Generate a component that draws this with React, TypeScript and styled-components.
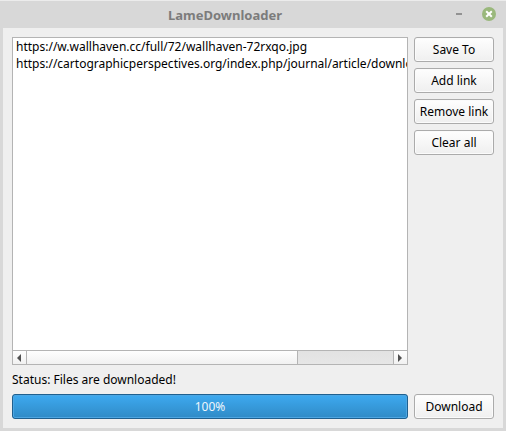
import React, { useState } from "react";
import styled, { createGlobalStyle } from "styled-components";

const GlobalStyle = createGlobalStyle`
  * { box-sizing: border-box; }
  body { margin: 0; background: #d8d8d8; }
  body, button { font-family: "Noto Sans", sans-serif; font-size: 12px; line-height: 17px; color: #000; }
`;

const Window = styled.div`
  min-height: 100vh;
  display: flex;
  flex-direction: column;
  background: #d8d8d8;
  border-top: 1px solid #ececec;
  padding: 0 3px 3px;
`;

const TitleBar = styled.header`
  height: 27px;
  flex: none;
  display: grid;
  grid-template-columns: 60px 1fr 60px;
  align-items: center;
`;

const Title = styled.h1`
  margin: 0;
  grid-column: 2;
  padding-right: 56px;
  text-align: center;
  font-size: 13px;
  line-height: 20px;
  font-weight: 700;
  color: #7c7c7c;
`;

const WindowControls = styled.div`
  align-self: start;
  display: flex;
  justify-content: flex-end;
  align-items: center;
  gap: 16px;
  padding: 6px 7px 0 0;
`;

const ControlButton = styled.button`
  width: 14px;
  height: 14px;
  padding: 0;
  border: 0;
  background: none;
  svg { display: block; }
`;

const Content = styled.main`
  flex: 1;
  display: grid;
  grid-template-columns: minmax(0, 1fr) 80px;
  grid-template-rows: 1fr 17px 25px;
  column-gap: 6px;
  row-gap: 6px;
  padding: 9px;
  background: #efefef;
`;

const ListFrame = styled.section`
  display: flex;
  flex-direction: column;
  min-width: 0;
  background: #fff;
  border: 1px solid #b4b4b4;
`;

const LinkList = styled.ul`
  flex: 1;
  margin: 0;
  padding: 0 0 0 3px;
  overflow: hidden;
  list-style: none;
  white-space: nowrap;
`;

const LinkItem = styled.li`
  height: 17px;
`;

const ScrollBar = styled.div`
  height: 14px;
  flex: none;
  display: flex;
  border-top: 1px solid #b4b4b4;
`;

const ScrollArrow = styled.button<{ $side: "left" | "right" }>`
  width: 14px;
  flex: none;
  display: flex;
  align-items: center;
  justify-content: center;
  padding: 0;
  border: 0 solid #b4b4b4;
  border-left-width: ${(p) => (p.$side === "right" ? "1px" : "0")};
  border-right-width: ${(p) => (p.$side === "left" ? "1px" : "0")};
  background: linear-gradient(#fefefe, #f1f1f1);
`;

const Track = styled.div`
  flex: 1;
  background: linear-gradient(#e2e2e2, #e6e6e6);
`;

const Thumb = styled.div`
  width: 74%;
  height: 100%;
  border-right: 1px solid #b4b4b4;
  background: linear-gradient(#fefefe, #f1f1f1);
`;

const Actions = styled.nav`
  display: flex;
  flex-direction: column;
  gap: 6px;
`;

const PushButton = styled.button`
  height: 25px;
  flex: none;
  padding: 0;
  border: 1px solid #ababab;
  border-radius: 3px;
  background: linear-gradient(#fefefe, #efefef);
  box-shadow: inset 0 0 0 1px #fbfbfb;
  white-space: nowrap;
`;

const Status = styled.p`
  margin: 0;
  grid-column: 1 / -1;
`;

const ProgressFrame = styled.div`
  display: flex;
  border: 1px solid #1f608f;
  border-radius: 3px;
  background: #308cc8;
  overflow: hidden;
`;

const ProgressFill = styled.div`
  display: flex;
  align-items: center;
  justify-content: center;
  border: 1px solid #4da6e2;
  border-radius: 2px;
  background: linear-gradient(#3da8ee, #308cc8);
  color: #eef6fc;
`;

const initialLinks = [
  "https://w.wallhaven.cc/full/72/wallhaven-72rxqo.jpg",
  "https://cartographicperspectives.org/index.php/journal/article/download",
];

function ArrowIcon({ d }: { d: string }) {
  return (
    <svg width="5" height="8" viewBox="0 0 5 8" aria-hidden="true">
      <path d={d} fill="#505050" />
    </svg>
  );
}

export default function App() {
  const [links, setLinks] = useState(initialLinks);
  const progress = 100;

  return (
    <>
      <GlobalStyle />
      <Window>
        <TitleBar>
          <Title>LameDownloader</Title>
          <WindowControls>
            <ControlButton aria-label="Minimize">
              <svg width="14" height="14" viewBox="0 0 14 14">
                <path d="M4 6h6v2H4z" fill="#929292" />
              </svg>
            </ControlButton>
            <ControlButton aria-label="Close">
              <svg width="14" height="14" viewBox="0 0 14 14">
                <circle cx="7" cy="7" r="7" fill="#9ab87c" />
                <path d="M4.2 4.2l5.6 5.6M9.8 4.2L4.2 9.8" stroke="#fff" strokeWidth="2" />
              </svg>
            </ControlButton>
          </WindowControls>
        </TitleBar>
        <Content>
          <ListFrame aria-label="Links">
            <LinkList>
              {links.map((link) => (
                <LinkItem key={link}>{link}</LinkItem>
              ))}
            </LinkList>
            <ScrollBar>
              <ScrollArrow $side="left" aria-label="Scroll left">
                <ArrowIcon d="M4 0v8L0 4z" />
              </ScrollArrow>
              <Track>
                <Thumb />
              </Track>
              <ScrollArrow $side="right" aria-label="Scroll right">
                <ArrowIcon d="M0 0v8L4 4z" />
              </ScrollArrow>
            </ScrollBar>
          </ListFrame>
          <Actions aria-label="Link actions">
            <PushButton>Save To</PushButton>
            <PushButton>Add link</PushButton>
            <PushButton onClick={() => setLinks(links.slice(0, -1))}>Remove link</PushButton>
            <PushButton onClick={() => setLinks([])}>Clear all</PushButton>
          </Actions>
          <Status role="status">Status: Files are downloaded!</Status>
          <ProgressFrame role="progressbar" aria-label="Download progress" aria-valuenow={progress}>
            <ProgressFill style={{ width: `${progress}%` }}>{progress}%</ProgressFill>
          </ProgressFrame>
          <PushButton>Download</PushButton>
        </Content>
      </Window>
    </>
  );
}
